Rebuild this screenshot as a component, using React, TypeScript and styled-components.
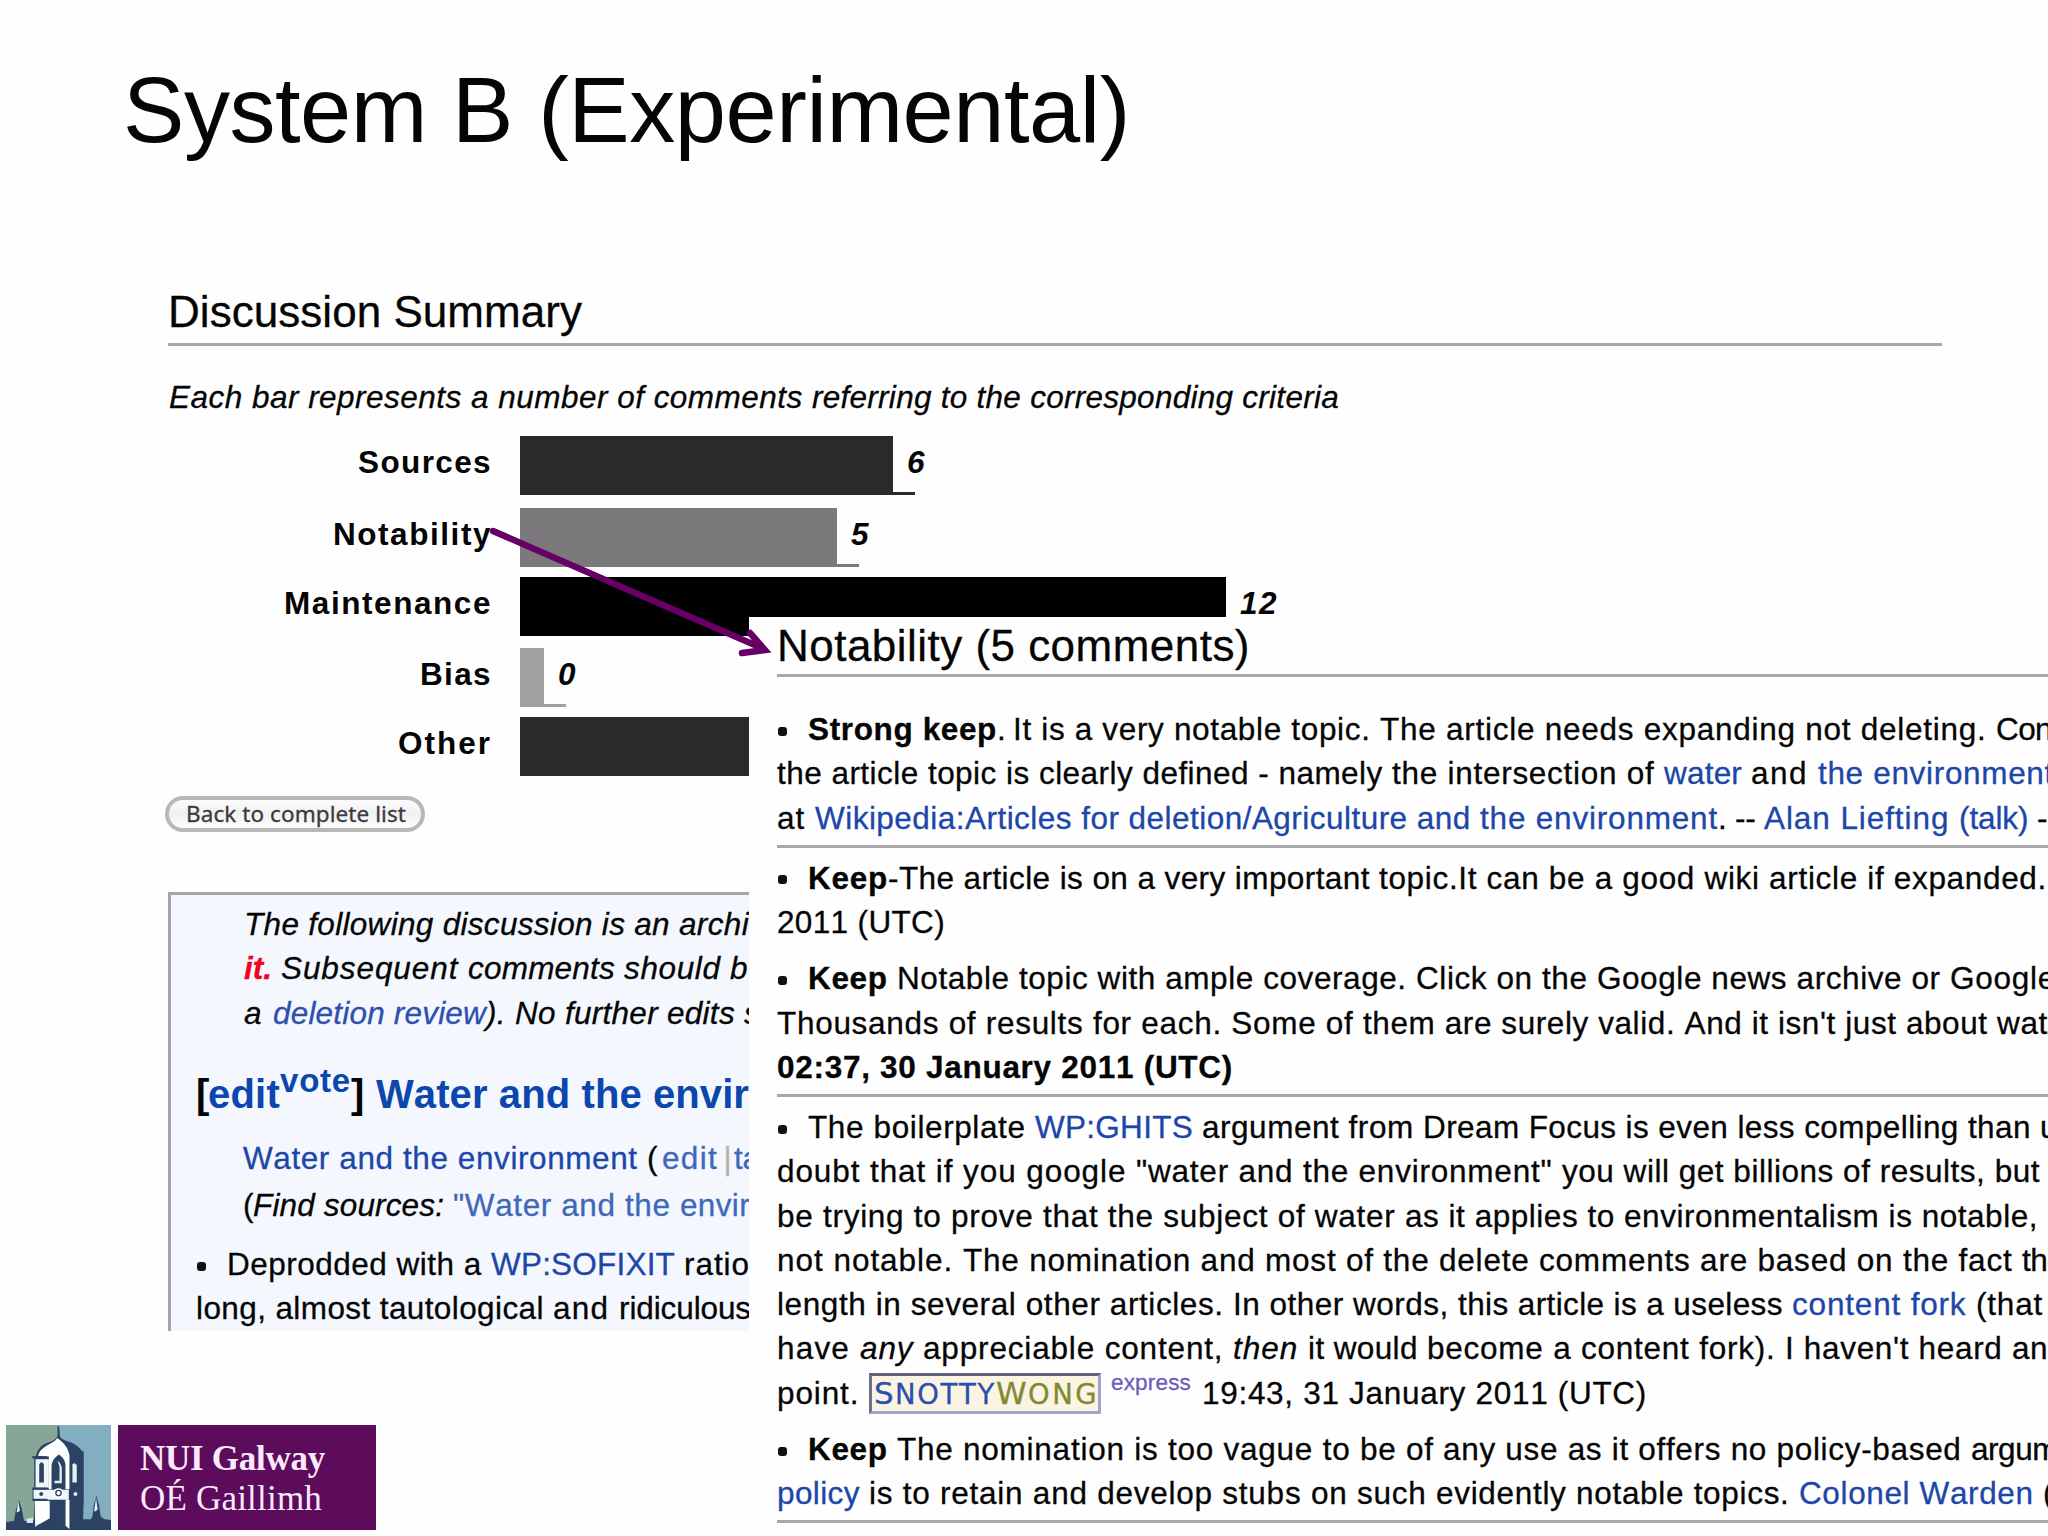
import { useLayoutEffect, useRef, useState } from "react";
import styled, { createGlobalStyle, css } from "styled-components";

type Look = "text" | "bold" | "italic" | "link" | "faintLink" | "linkItalic" | "warn" | "boldLink" | "divider";

// [text, width of the run in px, look]
type RunData = [string, number, Look?];

interface LineData {
  bullet?: boolean;
  runs: RunData[];
}

const BARS = [
  { label: "Sources", labelWidth: 134, length: 373, color: "#2b292c", count: "6", countWidth: 19, gap: 13 },
  { label: "Notability", labelWidth: 159, length: 317, color: "#7b797c", count: "5", countWidth: 19, gap: 10 },
  { label: "Maintenance", labelWidth: 208, length: 706, color: "#000000", count: "12", countWidth: 38, gap: 12 },
  { label: "Bias", labelWidth: 72, length: 24, color: "#a19fa2", count: "0", countWidth: 19, gap: 10 },
  { label: "Other", labelWidth: 94, length: 480, color: "#2b292c", count: "", countWidth: 0, gap: 0 },
];

const COMMENTS: { lines: LineData[]; ruled: boolean; gap: number }[] = [
  {
    gap: 30,
    ruled: true,
    lines: [
      {
        bullet: true,
        runs: [
          ["Strong keep", 189, "bold"],
          [". ", 16],
          ["It is a very notable topic. ", 367],
          ["The article needs expanding not deleting. ", 616],
          ["Con", 56],
        ],
      },
      {
        runs: [
          ["the article topic is clearly defined - namely ", 615],
          ["the intersection of ", 272],
          ["water ", 87, "link"],
          ["and ", 67],
          ["the environment", 236, "link"],
        ],
      },
      {
        runs: [
          ["at ", 38],
          ["Wikipedia:Articles for deletion/Agriculture and ", 665, "link"],
          ["the environment", 238, "link"],
          [". -- ", 46],
          ["Alan Liefting ", 195, "link"],
          ["(talk) ", 78, "link"],
          ["-", 11],
        ],
      },
    ],
  },
  {
    gap: 8,
    ruled: false,
    lines: [
      {
        bullet: true,
        runs: [
          ["Keep", 80, "bold"],
          ["-The article is on a very important ", 491],
          ["topic.It can be a good wiki article if expanded.", 668],
        ],
      },
      { runs: [["2011 (UTC)", 168]] },
    ],
  },
  {
    gap: 12,
    ruled: true,
    lines: [
      {
        bullet: true,
        runs: [
          ["Keep ", 89, "bold"],
          ["Notable topic with ample coverage. ", 519],
          ["Click on the Google news archive or ", 534],
          ["Google", 106],
        ],
      },
      {
        runs: [
          ["Thousands of results for each. Some of ", 586],
          ["them are surely valid. And it isn't just about ", 634],
          ["wat", 51],
        ],
      },
      { runs: [["02:37, 30 January 2011 (UTC)", 456, "bold"]] },
    ],
  },
  {
    gap: 8,
    ruled: false,
    lines: [
      {
        bullet: true,
        runs: [
          ["The boilerplate ", 227],
          ["WP:GHITS ", 167, "link"],
          ["argument from ", 221],
          ["Dream Focus is even less compelling than ", 617],
          ["u", 17],
        ],
      },
      {
        runs: [
          ["doubt that if you google ", 359],
          ["\"water and the environment\" ", 426],
          ["you will get billions of results, but", 478],
        ],
      },
      {
        runs: [
          ["be trying to prove that the subject of water ", 628],
          ["as it applies to environmentalism is notable,", 633],
        ],
      },
      {
        runs: [
          ["not notable. ", 186],
          ["The nomination and most of the ", 476],
          ["delete comments are based on the fact ", 583],
          ["the", 42],
        ],
      },
      {
        runs: [
          ["length in several other articles. ", 456],
          ["In other words, ", 225],
          ["this article is a useless ", 334],
          ["content fork ", 184, "link"],
          ["(that", 67],
        ],
      },
      {
        runs: [
          ["have ", 83],
          ["any ", 63, "italic"],
          ["appreciable content, ", 310],
          ["then ", 75, "italic"],
          ["it would ", 119],
          ["become a content fork). ", 358],
          ["I haven't heard ", 227],
          ["an", 36],
        ],
      },
    ],
  },
];

const CLOSING: LineData[] = [
  {
    bullet: true,
    runs: [
      ["Keep ", 89, "bold"],
      ["The nomination is too vague to be ", 509],
      ["of any use as it offers no policy-based ", 565],
      ["argum", 87],
    ],
  },
  {
    runs: [
      ["policy ", 92, "link"],
      ["is to retain and develop stubs on such ", 567],
      ["evidently notable topics. ", 363],
      ["Colonel Warden ", 244, "link"],
      ["(", 10],
    ],
  },
];

// Spreads the letters of a run so that it takes exactly the given width
function Run({ text, width, look = "text" }: { text: string; width: number; look?: Look }) {
  const ref = useRef<HTMLSpanElement>(null);
  const [spacing, setSpacing] = useState(0);

  useLayoutEffect(() => {
    if (!ref.current) return;
    const natural = ref.current.getBoundingClientRect().width;
    setSpacing((width - natural) / text.length);
  }, [text, width]);

  return (
    <RunText ref={ref} $look={look} style={{ letterSpacing: spacing }}>
      {text}
    </RunText>
  );
}

function TextLine({ bullet, runs }: LineData) {
  return (
    <Line>
      {bullet && <Bullet />}
      {runs.map(([text, width, look]) => (
        <Run key={text} text={text} width={width} look={look} />
      ))}
    </Line>
  );
}

function Tower() {
  return (
    <Emblem viewBox="19 21 316 316" preserveAspectRatio="none">
      <rect x="19" y="21" width="158" height="316" fill="#86a795" />
      <rect x="177" y="21" width="158" height="316" fill="#83aebf" />
      {/* dark silhouette: spire, dome, shaft and the roof line */}
      <path
        d="M174 24h5l2 30c4 10 16 14 32 19 20 8 32 22 34 26l6 2v144l-2 60h23l5-8 4-34 8-30 8 30 5 34 12 8 19 2v30H19v-24l24-3 6-34 9-30 9 30 6 34 30-2v-60l-4-4v-28l5-4v-93l6-6c2-14 12-28 28-36 18-8 32-10 36-24z"
        fill="#2b4264"
      />
      <path d="M173 60c-6 12-24 18-38 27-12 9-18 17-19 27l32 2v98h8V142c2-14 10-24 22-32 12 8 20 18 20 34v70h12V112c-4-22-16-38-37-52z" fill="#fdfefe" />
      <path d="M108 124h40v86h-40z" fill="#f0f7f6" />
      <path d="M119 140q7-14 14 0v54h-14z" fill="#2b4264" />
      <path d="M219 140q6-8 13 2v52h-13z" fill="#e4f0f4" />
      <path d="M102 216h106v30H102z" fill="#f0f6f6" />
      <path d="M105 250h46v52l-30 17q-9 3-14 9z" fill="#fdfefe" />
      <path d="M198 246h12v88l-12-10z" fill="#fdfefe" />
      <path d="M151 250h46v80h-46z" fill="#2b4264" />
      <path d="M174 128q9 6 13 20v48h-22v-7h15v-42z" fill="#e4f0ef" />
      <path d="M98 118h44M98 212h46M98 246h46" stroke="#2b4264" strokeWidth="6" />
      <circle cx="177" cy="226" r="15" fill="#fdfefe" />
      <circle cx="177" cy="226" r="8" fill="none" stroke="#2b4264" strokeWidth="4" />
      <circle cx="125" cy="229" r="6" fill="#2b4264" />
      <circle cx="228" cy="229" r="6" fill="#d8e9f0" />
      <path d="M56 250l5 30-10 4zM290 240l5 36-11 6z" fill="#e9f2f3" />
      <path d="M80 304l20-4v16H82z" fill="#d8e9f0" />
    </Emblem>
  );
}

export default function App() {
  return (
    <Slide>
      <GlobalStyle />
      <Title>
        <Run text="System B (Experimental)" width={1007} />
      </Title>

      <Summary>
        <SummaryHeading>
          <Run text="Discussion Summary" width={414} />
        </SummaryHeading>
        <Caption>
          <Run text="Each bar represents a number of comments " width={643} look="italic" />
          <Run text="referring to the corresponding criteria" width={527} look="italic" />
        </Caption>
        <Chart>
          {BARS.map((bar) => (
            <BarRow key={bar.label} $gap={bar.gap}>
              <BarLabel>
                <Run text={bar.label} width={bar.labelWidth} look="bold" />
              </BarLabel>
              <Bar $color={bar.color} style={{ width: bar.length }} />
              <BarCount $color={bar.color}>
                {bar.count && <Run text={bar.count} width={bar.countWidth} look="bold" />}
              </BarCount>
            </BarRow>
          ))}
        </Chart>
        <BackButton type="button">
          <Run text="Back to complete list" width={220} />
        </BackButton>
      </Summary>

      <Archive>
        <Notice>
          <TextLine runs={[["The following discussion is an ", 435, "italic"], ["archi", 70, "italic"]]} />
          <TextLine
            runs={[
              ["it. ", 37, "warn"],
              ["Subsequent ", 187, "italic"],
              ["comments ", 156, "italic"],
              ["should ", 106, "italic"],
              ["b", 18, "italic"],
            ]}
          />
          <TextLine
            runs={[
              ["a ", 29, "italic"],
              ["deletion review", 213, "linkItalic"],
              ["). ", 29, "italic"],
              ["No further edits ", 229, "italic"],
              ["s", 15, "italic"],
            ]}
          />
        </Notice>
        <ArchiveHeading>
          <Run text="[" width={12} look="bold" />
          <Run text="edit" width={72} look="boldLink" />
          <Vote>
            <Run text="vote" width={71} look="boldLink" />
          </Vote>
          <Run text="] " width={25} look="bold" />
          <Run text="Water and the " width={277} look="boldLink" />
          <Run text="envir" width={96} look="boldLink" />
        </ArchiveHeading>
        <Sources>
          <TextLine
            runs={[
              ["Water and the environment ", 404, "link"],
              ["(", 15],
              ["edit", 56, "faintLink"],
              [" | ", 16, "divider"],
              ["ta", 26, "faintLink"],
            ]}
          />
          <TextLine
            runs={[
              ["(", 10],
              ["Find sources: ", 200, "italic"],
              ["\"Water and the ", 227, "faintLink"],
              ["envir", 70, "faintLink"],
            ]}
          />
        </Sources>
        <TextLine
          bullet
          runs={[
            ["Deprodded with a ", 264],
            ["WP:SOFIXIT ", 193, "link"],
            ["ratio", 66],
          ]}
        />
        <TextLine
          runs={[
            ["long, almost tautological ", 357],
            ["and ", 66],
            ["ridiculous", 132],
          ]}
        />
      </Archive>

      <Logo>
        <Tower />
        <LogoPlate>
          <LogoName $bold>
            <Run text="NUI Galway" width={185} />
          </LogoName>
          <LogoName>
            <Run text="OÉ Gaillimh" width={182} />
          </LogoName>
        </LogoPlate>
      </Logo>

      <Panel>
        <PanelHeading>
          <Run text="Notability (5 comments)" width={473} />
        </PanelHeading>
        {COMMENTS.map((comment, i) => (
          <Comment key={i} $gap={comment.gap} $ruled={comment.ruled}>
            {comment.lines.map((line, j) => (
              <TextLine key={j} {...line} />
            ))}
          </Comment>
        ))}
        <Line>
          <Run text="point. " width={92} />
          <Signature>
            <SignaturePart $color="#2a4fae">
              <Run text="S" width={21} />
              <small>
                <Run text="NOTTY" width={101} />
              </small>
            </SignaturePart>
            <SignaturePart $color="#7f8a35">
              <Run text="W" width={32} />
              <small>
                <Run text="ONG" width={71} />
              </small>
            </SignaturePart>
          </Signature>
          <Express>
            <Run text="express" width={80} />
          </Express>
          <Run text="19:43, 31 January 2011 (UTC)" width={445} />
        </Line>
        <Comment $gap={12} $ruled>
          {CLOSING.map((line, i) => (
            <TextLine key={i} {...line} />
          ))}
        </Comment>
      </Panel>

      <Arrow viewBox="480 510 310 160">
        <path d="M493 531L764 649M750 633L765 650L742 653" />
      </Arrow>
    </Slide>
  );
}

const GlobalStyle = createGlobalStyle`
  body {
    margin: 0;
    background: #fefefe;
    overflow: hidden;
  }
`;

const Slide = styled.main`
  position: relative;
  display: flex;
  flex-direction: column;
  box-sizing: border-box;
  width: 2048px;
  height: 1536px;
  overflow: hidden;
  background: #fefefe;
  color: #050505;
  font-family: "Liberation Sans", Arial, sans-serif;
  font-size: 31.5px;
  line-height: 44.3px;
`;

const looks = {
  text: css``,
  bold: css`
    font-weight: 700;
  `,
  italic: css`
    font-style: italic;
  `,
  link: css`
    color: #1c46a8;
  `,
  faintLink: css`
    color: #3f68b8;
  `,
  linkItalic: css`
    color: #2d50b0;
    font-style: italic;
  `,
  warn: css`
    color: #f5001d;
    font-weight: 700;
    font-style: italic;
  `,
  boldLink: css`
    color: #0b47ac;
    font-weight: 700;
  `,
  divider: css`
    color: #b9b3a2;
  `,
};

const RunText = styled.span<{ $look: Look }>`
  flex: none;
  white-space: pre;
  font-kerning: none;
  font-variant-ligatures: none;
  ${({ $look }) => looks[$look]}
`;

const Line = styled.div`
  display: flex;
  align-items: baseline;
  height: 44.3px;
  -webkit-text-stroke: 0.3px;
`;

const Bullet = styled.span`
  flex: none;
  align-self: center;
  width: 9px;
  height: 9px;
  margin: 4px 21px 0 1px;
  border-radius: 3px;
  background: #111;
`;

const Title = styled.h1`
  display: flex;
  margin: 58px 0 0 123px;
  font-size: 92px;
  font-weight: 400;
  line-height: 104px;
`;

const Summary = styled.section`
  display: flex;
  flex-direction: column;
  align-items: flex-start;
  margin: 124px 106px 0 168px;
`;

const SummaryHeading = styled.h2`
  display: flex;
  width: 100%;
  height: 57px;
  margin: 0;
  border-bottom: 3px solid #a9a8aa;
  font-size: 44px;
  font-weight: 400;
  line-height: 51px;
  -webkit-text-stroke: 0.3px;
`;

const Caption = styled.p`
  display: flex;
  margin: 29px 0 0 1px;
  height: 61px;
  -webkit-text-stroke: 0.3px;
`;

const Chart = styled.div`
  display: flex;
  flex-direction: column;
`;

const BarRow = styled.div<{ $gap: number }>`
  display: flex;
  height: 59px;
  margin-bottom: ${({ $gap }) => $gap}px;
`;

const BarLabel = styled.div`
  display: flex;
  justify-content: flex-end;
  width: 324px;
  margin-right: 28px;
  padding-top: 4px;
`;

const Bar = styled.div<{ $color: string }>`
  background: ${({ $color }) => $color};
`;

const BarCount = styled.div<{ $color: string }>`
  display: flex;
  box-sizing: border-box;
  width: 22px;
  padding: 4px 0 0 14px;
  border-bottom: 3px solid ${({ $color }) => $color};
  font-style: italic;
`;

const BackButton = styled.button`
  display: flex;
  align-items: center;
  justify-content: center;
  box-sizing: border-box;
  width: 260px;
  height: 36px;
  margin: 20px 0 0 -3px;
  padding: 0 0 0 2px;
  border: 4px solid #b9b8b9;
  border-radius: 18px;
  background: linear-gradient(#fbfbfb, #f1f1f1 50%, #fdfdfd);
  color: #3c3a40;
  font-family: "Noto Sans", sans-serif;
  font-size: 22.5px;
  line-height: 26px;
  -webkit-text-stroke: 0.3px;
`;

const Archive = styled.section`
  box-sizing: border-box;
  flex: none;
  width: 581px;
  height: 439px;
  margin: 60px 0 0 168px;
  padding-left: 25px;
  overflow: hidden;
  border-top: 3px solid #a3a3a9;
  border-left: 3px solid #a3a3a9;
  background: #f4f8fe;
`;

const Notice = styled.div`
  padding: 7px 0 0 48px;
`;

const ArchiveHeading = styled.h3`
  display: flex;
  align-items: baseline;
  height: 68px;
  margin: 25px 0 0;
  font-size: 40px;
  line-height: 68px;
`;

const Vote = styled.sup`
  display: flex;
  position: relative;
  top: -16px;
  height: 0;
  font-size: 33px;
  vertical-align: baseline;
`;

const Sources = styled.div`
  display: grid;
  gap: 2.5px;
  padding: 8px 0 15px 47px;
`;

const Logo = styled.footer`
  display: flex;
  gap: 7px;
  margin: 94px 0 0 6px;
`;

const Emblem = styled.svg`
  width: 105px;
  height: 105px;
`;

const LogoPlate = styled.div`
  display: flex;
  flex-direction: column;
  box-sizing: border-box;
  width: 258px;
  height: 105px;
  padding: 14px 0 0 22px;
  background: #5c0c5b;
  color: #fbe9fb;
`;

const LogoName = styled.span<{ $bold?: boolean }>`
  display: flex;
  font-family: "Liberation Serif", "Times New Roman", serif;
  font-size: 35px;
  font-weight: ${({ $bold }) => ($bold ? 700 : 400)};
  line-height: 40px;
`;

// Covers the lower right part of the summary
const Panel = styled.section`
  position: absolute;
  top: 617px;
  left: 749px;
  box-sizing: border-box;
  width: 1299px;
  height: 919px;
  padding-left: 28px;
  overflow: hidden;
  background: #fefefe;
`;

const PanelHeading = styled.h2`
  display: flex;
  height: 57px;
  margin: 0;
  border-bottom: 3px solid #a9a8aa;
  font-size: 44px;
  font-weight: 400;
  line-height: 57px;
  -webkit-text-stroke: 0.3px;
`;

const Comment = styled.article<{ $gap: number; $ruled: boolean }>`
  padding: ${({ $gap }) => $gap}px 0 ${({ $ruled }) => ($ruled ? 4.8 : 0)}px;
  ${({ $ruled }) => $ruled && "border-bottom: 3px solid #a9a8aa;"}
`;

const Signature = styled.span`
  display: flex;
  align-items: baseline;
  box-sizing: border-box;
  width: 232px;
  height: 41px;
  padding-left: 2px;
  border: 3px solid #a5a2cc;
  border-top-color: #62607a;
  border-left-color: #706e88;
  background: #fcf4e2;
  font-family: "DejaVu Sans", sans-serif;
  font-size: 31px;
  line-height: 35px;
`;

const SignaturePart = styled.span<{ $color: string }>`
  display: flex;
  align-items: baseline;
  color: ${({ $color }) => $color};

  small {
    display: flex;
    font-size: 27.5px;
  }
`;

const Express = styled.sup`
  display: flex;
  position: relative;
  top: -14px;
  height: 0;
  margin: 0 11px 0 10px;
  color: #6a5cbc;
  font-size: 22.5px;
  vertical-align: baseline;
`;

const Arrow = styled.svg`
  position: absolute;
  top: 510px;
  left: 480px;
  width: 310px;
  height: 160px;
  fill: none;
  stroke: #660066;
  stroke-width: 6.5;
  stroke-linecap: round;
  stroke-linejoin: miter;
`;
